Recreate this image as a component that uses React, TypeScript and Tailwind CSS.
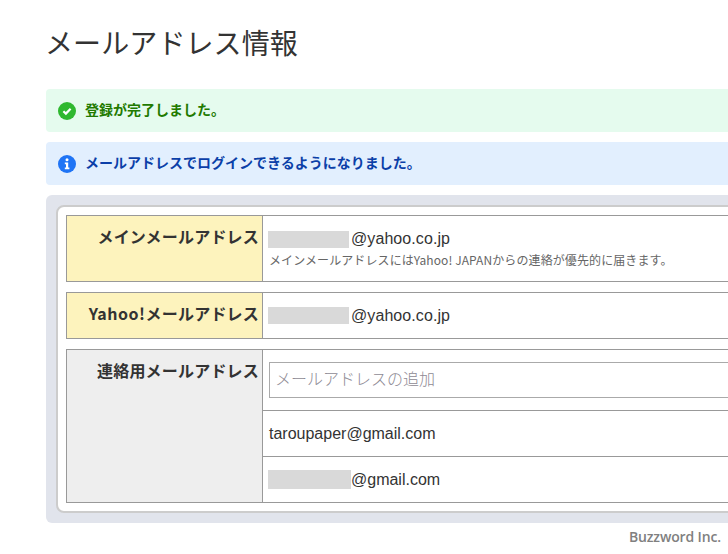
import React from "react";

const jp = "font-['Liberation_Sans','Noto_Sans_CJK_JP',sans-serif]";

function Row({ head, bg, children, className = "" }: { head: React.ReactNode; bg: string; children: React.ReactNode; className?: string }) {
  return (
    <div className={`flex border border-[#999] ${className}`}>
      <div className={`w-[196px] shrink-0 border-r border-[#999] pr-[3px] pt-[8px] text-right text-[16px] font-bold leading-[24px] tracking-[0.2px] text-[#333] font-['Noto_Sans_CJK_JP',sans-serif] ${bg}`}>
        {head}
      </div>
      <div className="flex-1 min-w-0">{children}</div>
    </div>
  );
}

function Mask({ w }: { w: string }) {
  return <span className={`inline-block h-[17px] bg-[#d9d9d9] ${w}`} />;
}

export default function App() {
  return (
    <div className={`relative h-[554px] w-[728px] overflow-hidden bg-white ${jp}`}>
      <div className="w-[800px] pl-[46px]">
        <h1 className="-ml-px h-[89px] pt-[20px] text-[28px] leading-[44px] tracking-[0.1px] text-[#333] font-['Noto_Sans_CJK_JP',sans-serif]">メールアドレス情報</h1>
        <div className="flex h-[43px] items-center gap-[9px] rounded-[4px] bg-[#e5fbee] pl-[12px] text-[14px] font-bold text-[#227a00] font-['Noto_Sans_CJK_JP',sans-serif]">
          <svg width="18" height="18" viewBox="0 0 18 18">
            <circle cx="9" cy="9" r="9" fill="#2fb82f" />
            <path d="M5.4 9.2 L7.9 11.6 L12.6 6.8" fill="none" stroke="#fff" strokeWidth="2.2" />
          </svg>
          <span className="pb-[2px]">登録が完了しました。</span>
        </div>
        <div className="mt-[10px] flex h-[43px] items-center gap-[9px] rounded-[4px] bg-[#e2effe] pl-[12px] text-[14px] font-bold text-[#0b3fa8] font-['Noto_Sans_CJK_JP',sans-serif]">
          <svg width="18" height="18" viewBox="0 0 18 18">
            <circle cx="9" cy="9" r="9" fill="#1f74f5" />
            <circle cx="9" cy="4.8" r="1.5" fill="#fff" />
            <path d="M6.8 7.6 H10.2 V12.6 H11.4 V14.2 H6.8 V12.6 H8 V9.2 H6.8 Z" fill="#fff" />
          </svg>
          <span className="pb-[2px]">メールアドレスでログインできるようになりました。</span>
        </div>
        <div className="mt-[10px] h-[328px] rounded-[6px] bg-[#e1e4ec] pl-[10px] pt-[10px]">
          <div className="h-[308px] rounded-[8px] border-2 border-[#ccc] bg-white pl-[8px] pt-[8px]">
            <Row head="メインメールアドレス" bg="bg-[#fdf3bd]" className="h-[67px]">
              <div className="pl-[5px] pt-[13px]">
                <div className="flex h-[20px] items-center text-[16px] tracking-[0.08px] text-[#333]">
                  <Mask w="w-[81px]" />
                  <span className="ml-[2px]">@yahoo.co.jp</span>
                </div>
                <div className="mt-[2px] pl-px text-[12px] leading-[18px] tracking-[0.1px] text-[#666] font-['Noto_Sans_CJK_JP',sans-serif]">メインメールアドレスにはYahoo! JAPANからの連絡が優先的に届きます。</div>
              </div>
            </Row>
            <Row head={<><span className="tracking-[0.55px]">Yahoo!</span>メールアドレス</>} bg="bg-[#fdf3bd]" className="mt-[10px] h-[47px]">
              <div className="flex h-full items-center pl-[5px] text-[16px] tracking-[0.08px] text-[#333]">
                <Mask w="w-[81px]" />
                <span className="ml-[2px]">@yahoo.co.jp</span>
              </div>
            </Row>
            <Row head="連絡用メールアドレス" bg="bg-[#eeeeee]" className="mt-[10px] h-[154px]">
              <div className="h-[61px] border-b border-[#999] pl-[6px] pt-[12px]">
                <div className="flex h-[36px] items-center border border-[#aaa] pb-[4px] pl-[5px] text-[16px] font-light text-[#8e8a94] font-['Noto_Sans_CJK_JP',sans-serif]">メールアドレスの追加</div>
              </div>
              <div className="flex h-[46px] items-center border-b border-[#999] pl-[6px] text-[16px] text-[#333]">taroupaper@gmail.com</div>
              <div className="flex h-[45px] items-center pl-[5px] text-[16px] text-[#333]">
                <span className="inline-block h-[19px] w-[83px] bg-[#d9d9d9]" />
                <span>@gmail.com</span>
              </div>
            </Row>
          </div>
        </div>
      </div>
      <div className="absolute left-[629px] top-[527px] text-[14px] font-semibold leading-[20px] tracking-[-0.15px] text-[#808080] font-['Open_Sans',sans-serif]">Buzzword Inc.</div>
    </div>
  );
}
